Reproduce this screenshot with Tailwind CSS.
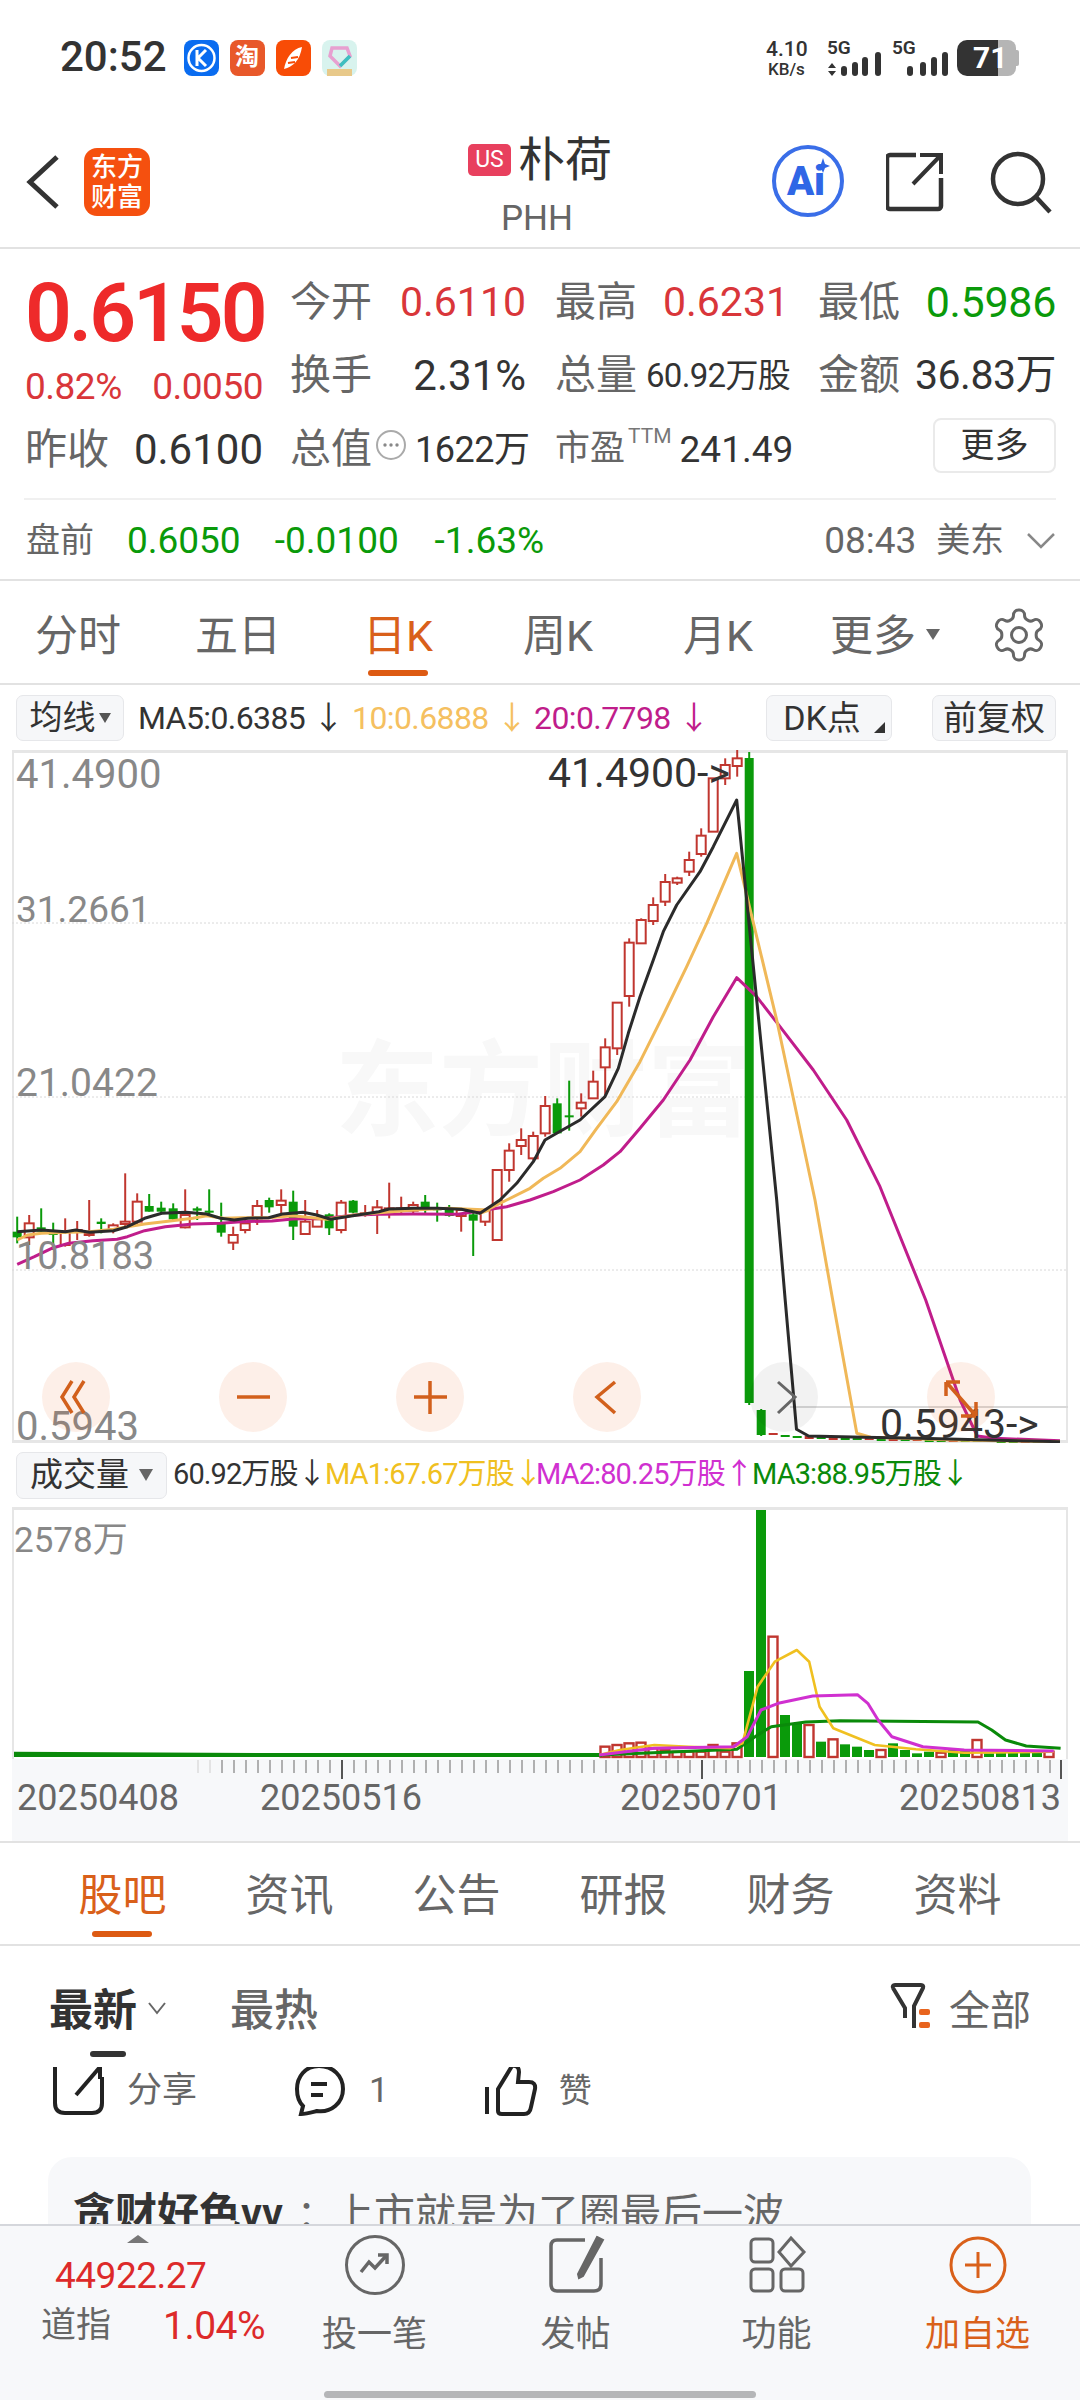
<!doctype html>
<html lang="zh">
<head>
<meta charset="utf-8">
<script src="https://cdn.jsdelivr.net/npm/@tailwindcss/browser@4"></script>
</head>
<body>
<div class="relative w-[1080px] h-[2400px] overflow-hidden bg-white text-[#333] font-['Roboto','Noto_Sans_CJK_SC',sans-serif]">

  <!-- status bar -->
  <div class="h-[115px] relative">
    <span class="absolute left-[60px] top-[32px] text-[42px] leading-[50px] font-medium text-[#333]">20:52</span>
    <svg class="absolute left-[180px] top-[36px]" width="190" height="44" viewBox="0 0 190 44">
      <rect x="4" y="4" width="35" height="36" rx="8" fill="#0a6cf0"/><circle cx="21.5" cy="22" r="13" fill="none" stroke="#fff" stroke-width="2.5"/><path d="M17 14V30M26 14L18 22L26 30" fill="none" stroke="#fff" stroke-width="3"/>
      <rect x="50" y="4" width="35" height="36" rx="8" fill="#e8582a"/><text x="67" y="29" font-size="24" font-weight="700" fill="#fff" text-anchor="middle" font-family="Noto Sans CJK SC">淘</text>
      <rect x="96" y="4" width="35" height="36" rx="8" fill="#f84c06"/><path d="M122 11C112 13 106 22 104 33C113 31 120 24 122 11Z" fill="#fff"/><path d="M111 22L118 21M108 27L115 26" stroke="#f84c06" stroke-width="2"/>
      <rect x="142" y="4" width="35" height="36" rx="8" fill="#d8f3ee"/><path d="M152 12H167L170 20L160 30L150 20Z" fill="none" stroke="#e7a0d0" stroke-width="3.5"/><path d="M160 30L170 20" stroke="#3cc0c0" stroke-width="3.5"/><rect x="147" y="33" width="25" height="7" fill="#e8c98a"/>
    </svg>
    <span class="absolute left-[766px] top-[39px] text-[21px] leading-[20px] font-medium">4.10</span>
    <span class="absolute left-[768px] top-[60px] text-[17px] leading-[18px] font-medium">KB/s</span>
    <span class="absolute left-[827px] top-[38px] text-[19px] leading-[20px] font-semibold">5G</span>
    <span class="absolute left-[892px] top-[38px] text-[19px] leading-[20px] font-semibold">5G</span>
    <svg class="absolute left-[826px] top-[48px]" width="125" height="30" viewBox="826 48 125 30">
      <path d="M832 63L836 68H828ZM832 76L828 71H836Z" fill="#333"/>
      <g fill="#333"><rect x="841" y="66" width="6" height="10" rx="3"/><rect x="852" y="62" width="6" height="14" rx="3"/><rect x="862" y="57" width="6" height="19" rx="3"/><rect x="875" y="52" width="6" height="24" rx="3"/>
      <rect x="907" y="66" width="6" height="10" rx="3"/><rect x="920" y="62" width="6" height="14" rx="3"/><rect x="931" y="57" width="6" height="19" rx="3"/><rect x="942" y="52" width="6" height="24" rx="3"/></g>
    </svg>
    <div class="absolute left-[957px] top-[40px] flex h-[36px] items-stretch">
      <div class="w-[41px] bg-[#333] rounded-l-[10px]"></div>
      <div class="w-[18px] bg-[#b5b5b5] rounded-r-[8px]"></div>
      <div class="w-[3px] my-[10px] bg-[#b5b5b5] rounded-r-[2px]"></div>
    </div>
    <span class="absolute left-[973px] top-[39px] text-[30px] leading-[38px] font-bold text-white">71</span>
  </div>

  <!-- title bar -->
  <div class="h-[134px] flex border-b-2 border-[#e2e2e2]">
    <div class="w-[400px] flex items-start">
      <svg class="ml-[25px] mt-[38px]" width="36" height="58" viewBox="0 0 36 58"><path d="M32 4L5 29L32 54" fill="none" stroke="#333" stroke-width="5"/></svg>
      <div class="ml-[23px] mt-[33px] w-[66px] h-[68px] rounded-[13px] bg-[#f5500f] text-white text-[26px] leading-[30px] font-medium flex items-center justify-center text-center">东方<br>财富</div>
    </div>
    <div class="w-[280px] flex flex-col items-center">
      <div class="flex items-center h-[66px] mt-[12px]">
        <span class="w-[43px] h-[32px] -mt-[1px] rounded-[5px] bg-[#e8405e] text-white text-[23px] leading-[32px] text-center">US</span>
        <span class="ml-[7px] text-[47px] leading-[56px] text-[#333]">朴荷</span>
      </div>
      <span class="-ml-[6px] text-[35px] leading-[36px] text-[#666] mt-[8px]">PHH</span>
    </div>
    <div class="w-[400px] relative">
      <svg class="absolute left-[90px] top-[28px]" width="75" height="75" viewBox="0 0 75 75">
        <circle cx="38" cy="38" r="34" fill="none" stroke="#3a6ee8" stroke-width="4"/>
        <text x="36" y="52" font-size="40" font-weight="900" fill="#2f66e6" text-anchor="middle" font-family="Roboto">Ai</text>
        <path d="M53 15L55 21L60 23L55 25L53 30L51 25L46 23L51 21Z" fill="#2f66e6"/>
      </svg>
      <svg class="absolute left-[206px] top-[36px]" width="62" height="62" viewBox="888 151 62 62">
        <path d="M918 155H892A3 3 0 0 0 889 158V206A3 3 0 0 0 892 209H940A3 3 0 0 0 943 206V178" fill="none" stroke="#333" stroke-width="4.5"/>
        <path d="M915 184L942 156M922 155H943V174" fill="none" stroke="#333" stroke-width="4"/>
      </svg>
      <svg class="absolute left-[310px] top-[36px]" width="64" height="64" viewBox="990 150 64 64">
        <circle cx="1018" cy="178" r="25" fill="none" stroke="#333" stroke-width="4.5"/><path d="M1036 196L1050 211" stroke="#333" stroke-width="4.5"/>
      </svg>
    </div>
  </div>

  <!-- quote -->
  <div class="h-[250px] flex whitespace-nowrap">
    <div class="w-[290px] pl-[25px] flex flex-col">
      <span class="text-[82px] leading-[90px] mt-[19px] font-semibold tracking-[-3px] text-[#ee2a2a]">0.6150</span>
      <div class="flex w-[238px] justify-between text-[37px] leading-[40px] mt-[9px] text-[#d9363a] tracking-[-0.5px]"><span>0.82%</span><span>0.0050</span></div>
      <div class="flex w-[238px] justify-between items-center text-[42px] leading-[46px] mt-[20px]"><span class="text-[#666]">昨收</span><span>0.6100</span></div>
    </div>
    <div class="flex-1 pr-[24px] flex flex-col pt-[17px]">
      <div class="h-[73px] flex items-center text-[41px]">
        <span class="w-[265px] flex justify-between items-center pr-[29px]"><span class="text-[#666]">今开</span><span class="text-[#d9363a]">0.6110</span></span>
        <span class="w-[263px] flex justify-between items-center pr-[29px]"><span class="text-[#666]">最高</span><span class="text-[#d9363a]">0.6231</span></span>
        <span class="flex-1 flex justify-between items-center"><span class="text-[#666]">最低</span><span class="text-[#0a9a0a] text-[43px] tracking-[-0.3px]">0.5986</span></span>
      </div>
      <div class="h-[73px] flex items-center text-[41px]">
        <span class="w-[265px] flex justify-between items-center pr-[29px]"><span class="text-[#666]">换手</span><span class="text-[42px]">2.31%</span></span>
        <span class="w-[263px] flex justify-between items-center pr-[28px]"><span class="text-[#666]">总量</span><span class="text-[33px] tracking-[-0.7px]">60.92万股</span></span>
        <span class="flex-1 flex justify-between items-center"><span class="text-[#666]">金额</span><span class="text-[41px] tracking-[-0.5px]">36.83万</span></span>
      </div>
      <div class="h-[75px] flex items-center text-[41px]">
        <span class="w-[265px] flex items-center"><span class="text-[#666]">总值</span>
          <svg class="ml-[3px] -mt-[10px] shrink-0" width="32" height="32" viewBox="0 0 32 32"><circle cx="16" cy="16" r="14" fill="none" stroke="#aaa" stroke-width="2"/><g fill="#888"><circle cx="10" cy="16" r="1.7"/><circle cx="16" cy="16" r="1.7"/><circle cx="22" cy="16" r="1.7"/></g></svg>
          <span class="ml-[8px] text-[36px] tracking-[-0.5px]">1622万</span></span>
        <span class="w-[235px] flex items-center relative"><span class="text-[#666] text-[35px]">市盈</span><span class="text-[21px] leading-[20px] text-[#777] ml-[3px] -mt-[28px]">TTM</span><span class="ml-[8px] text-[37px]">241.49</span></span>
        <span class="ml-[143px] w-[123px] h-[55px] -mt-[8px] text-[34px] border-2 border-[#eaeaea] rounded-[8px] flex items-center justify-center">更多</span>
      </div>
    </div>
  </div>
  <div class="mx-[24px] h-[2px] bg-[#f0f0f0] -mt-[1px]"></div>

  <!-- pre-market -->
  <div class="h-[81px] flex items-center pt-[2px] text-[37px] border-b-2 border-[#e2e2e2] pl-[26px] pr-[24px]">
    <span class="text-[#666] text-[34px] w-[101px]">盘前</span>
    <span class="text-[#0a9a0a] w-[148px]">0.6050</span>
    <span class="text-[#0a9a0a] w-[160px]">-0.0100</span>
    <span class="text-[#0a9a0a] w-[390px]">-1.63%</span>
    <span class="text-[#666] w-[112px]">08:43</span>
    <span class="text-[#666] text-[34px] w-[90px]">美东</span>
    <svg width="30" height="18" viewBox="0 0 30 18"><path d="M2 2L15 15L28 2" fill="none" stroke="#888" stroke-width="2.5"/></svg>
  </div>

  <!-- period tabs -->
  <div class="h-[104px] relative border-b-2 border-[#e2e2e2] text-[43px] text-[#666]">
    <div class="grid grid-cols-6 w-[960px] h-[100px] items-center text-center pt-[10px] -ml-[2px]">
      <span>分时</span><span>五日</span><span class="text-[#d9601a]">日K</span><span>周K</span><span>月K</span>
      <span class="flex items-center justify-center pl-[14px]">更多<i class="ml-[10px] -mt-[4px] w-0 h-0 border-x-[7px] border-x-transparent border-t-[11px] border-t-[#666]"></i></span>
    </div>
    <div class="absolute left-[368px] top-[89px] w-[60px] h-[6px] rounded-[3px] bg-[#dd5a12]"></div>
    <svg class="absolute left-[989px] top-[24px]" width="60" height="60" viewBox="0 0 24 24" fill="none" stroke="#666" stroke-width="1.2"><path d="M12.22 2h-.44a2 2 0 0 0-2 2v.18a2 2 0 0 1-1 1.73l-.43.25a2 2 0 0 1-2 0l-.15-.08a2 2 0 0 0-2.73.73l-.22.38a2 2 0 0 0 .73 2.73l.15.1a2 2 0 0 1 1 1.72v.51a2 2 0 0 1-1 1.74l-.15.09a2 2 0 0 0-.73 2.73l.22.38a2 2 0 0 0 2.73.73l.15-.08a2 2 0 0 1 2 0l.43.25a2 2 0 0 1 1 1.73V20a2 2 0 0 0 2 2h.44a2 2 0 0 0 2-2v-.18a2 2 0 0 1 1-1.73l.43-.25a2 2 0 0 1 2 0l.15.08a2 2 0 0 0 2.73-.73l.22-.39a2 2 0 0 0-.73-2.73l-.15-.08a2 2 0 0 1-1-1.74v-.5a2 2 0 0 1 1-1.74l.15-.09a2 2 0 0 0 .73-2.73l-.22-.38a2 2 0 0 0-2.73-.73l-.15.08a2 2 0 0 1-2 0l-.43-.25a2 2 0 0 1-1-1.73V4a2 2 0 0 0-2-2z"/><circle cx="12" cy="12" r="3"/></svg>
  </div>

  <!-- MA legend -->
  <div class="h-[65px] flex items-center pl-[16px] text-[32px] pt-[1px] tracking-[-0.6px]">
    <span class="w-[108px] h-[46px] bg-[#f6f7f9] border border-[#e6e7ea] rounded-[7px] flex items-center justify-center text-[33px] tracking-normal">均线<i class="ml-[3px] w-0 h-0 border-x-[6px] border-x-transparent border-t-[10px] border-t-[#555]"></i></span>
    <span class="ml-[14px] w-[214px]">MA5:0.6385 ↓</span>
    <span class="w-[182px] text-[#f5c060]">10:0.6888 ↓</span>
    <span class="w-[232px] text-[#c01d8b]">20:0.7798 ↓</span>
    <span class="relative w-[126px] h-[46px] bg-[#f6f7f9] border border-[#e6e7ea] rounded-[7px] flex items-center justify-center tracking-normal text-[34px] pr-[14px]">DK点<i class="absolute right-[6px] bottom-[7px] w-0 h-0 border-l-[11px] border-l-transparent border-b-[11px] border-b-[#333]"></i></span>
    <span class="ml-[40px] w-[124px] h-[46px] bg-[#f6f7f9] border border-[#e6e7ea] rounded-[7px] flex items-center justify-center tracking-normal text-[34px]">前复权</span>
  </div>

  <!-- price chart -->
  <div class="relative ml-[12px] w-[1056px] h-[693px] border-x-2 border-y-[3px] border-[#e6e6e6]">
    <span class="absolute left-[321px] top-[285px] text-[104px] leading-[110px] font-bold text-[#f8f8f8] whitespace-nowrap">东方财富</span>
    <svg id="price" class="absolute -left-[2px] -top-[3px]" width="1056" height="693" viewBox="12 750 1056 693"></svg>
    <span class="absolute left-[2px] top-[0px] text-[40px] leading-[44px] text-[#888]">41.4900</span>
    <span class="absolute left-[2px] top-[135px] text-[37px] leading-[44px] text-[#888]">31.2661</span>
    <span class="absolute left-[2px] top-[308px] text-[39px] leading-[44px] text-[#888]">21.0422</span>
    <span class="absolute left-[2px] top-[481px] text-[38px] leading-[44px] text-[#888]">10.8183</span>
    <span class="absolute left-[2px] top-[658px] text-[40px] leading-[32px] text-[#888]">0.5943</span>
    <span class="absolute left-[534px] top-[0px] text-[41px] leading-[40px] text-[#333]">41.4900-&gt;</span>
    <span class="absolute left-[866px] top-[655px] text-[41px] leading-[32px] text-[#333]">0.5943-&gt;</span>
    <!-- zoom and pan buttons -->
    <svg class="absolute -left-[2px] -top-[3px]" width="1056" height="693" viewBox="12 750 1056 693">
      <g fill="#e8641e" fill-opacity=".1"><ellipse cx="76" cy="1397" rx="34" ry="35"/><ellipse cx="253" cy="1397" rx="34" ry="35"/><ellipse cx="430" cy="1397" rx="34" ry="35"/><ellipse cx="607" cy="1397" rx="34" ry="35"/><ellipse cx="961" cy="1397" rx="34" ry="35"/></g>
      <ellipse cx="784" cy="1397" rx="34" ry="35" fill="#000" fill-opacity=".05"/>
      <g fill="none" stroke="#d2601c" stroke-width="3.5">
        <path d="M72 1381L62 1397L72 1413M84 1381L74 1397L84 1413"/>
        <path d="M237 1397H270"/>
        <path d="M414 1397H447M430 1381V1414"/>
        <path d="M615 1382L597 1397L615 1413"/>
        <path d="M946 1382H960M946 1382V1396M947 1383L976 1416M976 1402V1416M961 1416H976"/>
      </g>
      <path d="M778 1382L795 1397L778 1413" fill="none" stroke="#666" stroke-width="3"/>
    </svg>
  </div>

  <!-- volume legend -->
  <div class="h-[64px] flex items-center pl-[16px] text-[29px] tracking-[-0.9px] whitespace-nowrap">
    <span class="w-[151px] h-[47px] bg-[#f6f7f9] border border-[#e6e7ea] rounded-[7px] flex items-center justify-center text-[33px] tracking-normal">成交量<i class="ml-[10px] w-0 h-0 border-x-[7px] border-x-transparent border-t-[12px] border-t-[#666]"></i></span>
    <span class="ml-[6px] w-[152px]">60.92万股↓</span>
    <span class="w-[211px] text-[#f0c020]">MA1:67.67万股↓</span>
    <span class="w-[216px] text-[#d030d0]">MA2:80.25万股↑</span>
    <span class="text-[#0a8a0a]">MA3:88.95万股↓</span>
  </div>

  <!-- volume chart -->
  <div class="relative ml-[12px] w-[1056px] h-[252px] border-x-2 border-t-[3px] border-[#e6e6e6] overflow-hidden">
    <svg id="vol" class="absolute -left-[2px] -top-[3px]" width="1056" height="252" viewBox="12 1507 1056 252"></svg>
    <span class="absolute left-[0px] top-[10px] text-[35px] leading-[42px] text-[#888]">2578万</span>
  </div>

  <!-- dates -->
  <div class="relative ml-[12px] w-[1056px] h-[82px] bg-[#f7f8fa] text-[36px] text-[#666]">
    <svg id="ticks" class="absolute left-0 top-0" width="1056" height="20" viewBox="12 1758 1056 20"></svg>
    <div class="h-full flex pt-[17px] leading-[44px]">
      <span class="ml-[5px] w-[243px]">20250408</span>
      <span class="w-[360px]">20250516</span>
      <span class="w-[279px]">20250701</span>
      <span>20250813</span>
    </div>
  </div>
  <div class="h-[2px] bg-[#e2e2e2]"></div>

  <!-- section tabs -->
  <div class="relative h-[103px] border-b-2 border-[#e2e2e2] px-[39px] text-[44px] text-[#666]">
    <div class="grid grid-cols-6 h-[86px] items-center text-center pt-[20px]">
      <span class="text-[#d9601a]">股吧</span><span>资讯</span><span>公告</span><span>研报</span><span>财务</span><span>资料</span>
    </div>
    <div class="absolute left-[92px] top-[88px] w-[60px] h-[6px] rounded-[3px] bg-[#dd5a12]"></div>
  </div>

  <!-- filter row -->
  <div class="relative h-[121px] flex items-start pt-[40px] pl-[49px] text-[44px] leading-[50px]">
    <span class="font-semibold text-[#333]">最新</span>
    <svg class="ml-[10px] mt-[15px]" width="20" height="14" viewBox="0 0 20 14"><path d="M2 2L10 12L18 2" fill="none" stroke="#666" stroke-width="2"/></svg>
    <span class="ml-[63px] font-medium text-[#666]">最热</span>
    <svg class="ml-[571px] -mt-[4px]" width="44" height="50" viewBox="0 0 44 50"><path d="M4 6Q3 3 6 3H32Q35 3 34 6L25 24V46M4 6L16 26V36" fill="none" stroke="#333" stroke-width="4"/><rect x="30" y="27" width="11" height="6" rx="2" fill="#e8641e"/><rect x="30" y="40" width="11" height="6" rx="2" fill="#e8641e"/></svg>
    <span class="ml-[16px] text-[41px] text-[#666]">全部</span>
    <div class="absolute left-[90px] top-[105px] w-[36px] h-[6px] rounded-[3px] bg-[#333]"></div>
  </div>

  <!-- actions -->
  <div class="relative h-[90px] pl-[50px] flex items-start overflow-hidden">
    <svg width="60" height="50" viewBox="0 0 60 50" fill="none" stroke="#222" stroke-width="4"><path d="M5 0V36Q5 46 15 46H42Q52 46 52 36V10"/><path d="M26 28L50 0"/><path d="M50 0V12" /></svg>
    <span class="ml-[17px] mt-[4px] text-[35px] leading-[40px] text-[#666]">分享</span>
    <svg class="ml-[96px]" width="56" height="50" viewBox="0 0 56 50" fill="none" stroke="#222" stroke-width="4"><path d="M26 -1C12 -1 4 10 4 22C4 30 7 36 10 39L8 47C14 47 20 45 24 44C38 46 50 36 50 22C50 9 40 -1 26 -1Z"/><path d="M18 17H34M18 28H30"/></svg>
    <span class="ml-[20px] mt-[4px] text-[35px] leading-[40px] text-[#666]">1</span>
    <svg class="ml-[95px]" width="58" height="50" viewBox="0 0 58 50" fill="none" stroke="#222" stroke-width="4"><path d="M3 20V47"/><path d="M14 22V44Q14 47 18 47H40Q46 47 47 40L51 22Q52 15 45 15H34L35 5Q35 -2 28 -1Z"/></svg>
    <span class="ml-[17px] mt-[4px] text-[33px] leading-[40px] text-[#666]">赞</span>
  </div>

  <!-- comment card, cut by the bottom bar -->
  <div class="ml-[48px] w-[983px] h-[300px] rounded-[24px] bg-[#f7f8fa] pt-[33px] pl-[25px] flex items-start text-[38px] leading-[48px]">
    <span class="font-semibold text-[#333] text-[42px]">贪财好色vv</span>
    <span class="ml-[14px] text-[#666]">：</span>
    <span class="-ml-[2px] text-[#666] text-[41px]">上市就是为了圈最后一波</span>
  </div>

  <!-- bottom bar -->
  <div class="absolute left-0 bottom-0 w-full h-[176px] bg-[#f7f8fa] border-t-2 border-[#d5d7dc] flex items-start">
    <div class="relative w-[274px] h-full">
      <i class="absolute left-[127px] top-[9px] w-0 h-0 border-x-[11px] border-x-transparent border-b-[8px] border-b-[#777]"></i>
      <span class="absolute left-[55px] top-[28px] text-[37px] leading-[44px] text-[#dd2a2a] tracking-[-0.5px]">44922.27</span>
      <span class="absolute left-[41px] top-[78px] text-[35px] leading-[44px] text-[#666]">道指</span>
      <span class="absolute left-[163px] top-[78px] text-[39px] leading-[44px] text-[#dd2a2a] tracking-[-0.5px]">1.04%</span>
    </div>
    <div class="w-[201px] flex flex-col items-center text-[35px] leading-[44px] text-[#666] pt-[8px]">
      <svg width="62" height="62" viewBox="0 0 62 62" fill="none" stroke="#666" stroke-width="3"><circle cx="31" cy="31" r="28.5"/><path d="M17 38L25 28L31 34L42 22" stroke-width="3.5"/><path d="M34 21H43V30" stroke-width="3.5"/></svg>
      <span class="mt-[17px]">投一笔</span>
    </div>
    <div class="w-[201px] flex flex-col items-center text-[35px] leading-[44px] text-[#666] pt-[8px]">
      <svg width="62" height="62" viewBox="0 0 62 62" fill="none" stroke="#666" stroke-width="3.5"><path d="M40 6H12Q6 6 6 12V50Q6 57 12 57H49Q56 57 56 50V24"/><path d="M52 3L58 6L38 42L34 44L33 40Z" fill="#666" stroke-width="2"/></svg>
      <span class="mt-[17px]">发帖</span>
    </div>
    <div class="w-[201px] flex flex-col items-center text-[35px] leading-[44px] text-[#666] pt-[8px]">
      <svg width="62" height="62" viewBox="0 0 62 62" fill="none" stroke="#666" stroke-width="3"><rect x="5" y="5" width="22" height="23" rx="4"/><path d="M45 4L58 18L45 32L33 18Z"/><rect x="5" y="35" width="22" height="22" rx="4"/><rect x="35" y="35" width="22" height="22" rx="4"/></svg>
      <span class="mt-[17px]">功能</span>
    </div>
    <div class="w-[201px] flex flex-col items-center text-[35px] leading-[44px] text-[#d9601a] pt-[8px]">
      <svg width="62" height="62" viewBox="0 0 62 62" fill="none" stroke="#d9601a" stroke-width="3"><circle cx="31" cy="31" r="27"/><path d="M18 31H44M31 18V44"/></svg>
      <span class="mt-[17px]">加自选</span>
    </div>
    <div class="absolute left-[324px] top-[165px] w-[432px] h-[7px] rounded-full bg-[#b5b6b8]"></div>
  </div>
</div>

<script>
var RED='#c0362f',GRN='#0a9a0a',NS='http://www.w3.org/2000/svg';
function el(p,n,a){var e=document.createElementNS(NS,n);for(var k in a)e.setAttribute(k,a[k]);p.appendChild(e);return e;}
var price=document.getElementById('price');
function X(i){return 17.2+12*i;}
function candle(i,c,w1,b1,b2,w2){
  var x=X(i),col=c?RED:GRN;
  el(price,'line',{x1:x,x2:x,y1:w1,y2:w2,stroke:col,'stroke-width':2});
  if(c) el(price,'rect',{x:x-4.5,y:b1,width:9,height:Math.max(b2-b1,1),fill:'#fff',stroke:col,'stroke-width':2});
  else el(price,'rect',{x:x-4.5,y:b1,width:9,height:Math.max(b2-b1,2),fill:col});
}
[923,1097,1270].forEach(function(y){el(price,'line',{x1:12,x2:1068,y1:y,y2:y,stroke:'#d8d8d8','stroke-width':1,'stroke-dasharray':'2 2'});});
el(price,'line',{x1:790,x2:1068,y1:1407,y2:1407,stroke:'#d8d8d8','stroke-width':2});
var a=[[0,290,335,352,370],[1,285,310,352,375],[0,265,322,335,340],[0,308,335,345,390],[1,295,335,375,380],[1,303,330,335,360],[1,240,340,345,350],[0,295,305,312,340],[1,310,316,328,340],[1,160,305,312,325],[1,220,245,305,315],[0,222,258,275,275],[0,245,263,275,280],[0,250,265,298,300],[1,208,285,322,325],[0,260,265,272,300],[0,208,272,278,290],[0,248,310,338,350],[1,320,345,368,390],[1,300,310,330,340],[1,240,258,295,315],[0,233,240,262,278],[1,208,242,255,280],[0,212,245,320,360],[1,240,305,342,342],[1,270,298,320,320],[0,280,283,325,345],[1,240,248,330,340],[0,240,242,278,280],[1,255,280,283,290],[1,240,262,282,342],[1,188,265,275,295],[1,230,265,272,285],[1,245,255,272,280],[0,225,245,268,280],[0,248,265,270,305],[0,255,270,288,290],[1,265,270,288,335],[0,265,283,302,408],[1,270,270,305,318]];
a.forEach(function(d,i){candle(i,d[0],1120+d[1]/3,1120+d[2]/3,1120+d[3]/3,1120+d[4]/3);});
var b=[[1,1290,1290,1500,1500],[1,1210,1232,1290,1325],[1,1165,1200,1218,1245],[1,1175,1188,1255,1260],[1,1068,1098,1180,1190],[0,1075,1090,1180,1180],[0,1022,1126,1132,1172],[1,1060,1088,1105,1130],[1,992,1025,1075,1075],[1,895,922,982,1065],[1,788,788,925,945],[1,595,608,768,800],[1,535,540,610,610],[1,472,495,543,555],[1,402,426,485,498],[1,410,415,428,435],[1,335,360,395,408],[1,265,287,342,350],[1,115,115,275,275],[1,55,75,115,135],[1,30,55,78,110]];
b.forEach(function(d,i){candle(40+i,d[0],740+d[1]/3,740+d[2]/3,740+d[3]/3,740+d[4]/3);});
candle(61,0,752,758,1403,1405);
candle(62,0,1409,1410,1435,1436);
var tail=[[1,1433,2],[0,1435,2],[0,1436,2],[1,1436,3],[0,1437,2],[1,1437,3],[0,1438,2],[0,1438,2],[1,1438,2],[0,1439,2],[1,1439,2],[0,1439,2],[1,1439,2],[0,1440,2],[0,1440,2],[1,1440,2],[0,1440,2],[0,1440,2],[1,1440,2],[0,1441,2],[0,1441,2],[1,1441,2],[0,1441,2],[1,1441,2]];
tail.forEach(function(d,i){el(price,'rect',{x:X(63+i)-4.5,y:d[1],width:9,height:d[2],fill:d[0]?RED:GRN});});
function pts(list,fx,fy){return list.map(function(p){return fx(p[0]).toFixed(1)+','+fy(p[1]).toFixed(1);});}
var f5x=function(x){return x/2.904;},f5y=function(y){return 1120+y/3;},f4x=function(x){return 480+x/3;},f4y=function(y){return 740+y/3;},f6x=function(x){return 540+x/2.904;},f6y=function(y){return 1300+y/3;};
function ma(col,p5,p4,p6){
  var s=pts(p5,f5x,f5y).concat(pts(p4,f4x,f4y),pts(p6,f6x,f6y)).join(' ');
  el(price,'polyline',{points:s,fill:'none',stroke:col,'stroke-width':3,'stroke-linejoin':'round'});
}
ma('#c01d8b',[[50,433],[100,410],[150,385],[200,370],[270,362],[340,358],[370,350],[420,332],[480,320],[560,312],[640,310],[700,305],[790,303],[850,297],[950,295],[1030,285],[1100,283],[1200,282],[1330,283]],[[80,1400],[150,1380],[220,1355],[300,1320],[370,1275],[420,1235],[480,1165],[550,1080],[630,960],[700,830],[770,713],[830,770],[900,860],[1000,990],[1100,1140],[1200,1340]],[[1120,0],[1220,300],[1270,408],[1320,415],[1510,422]]);
ma('#f0b858',[[50,360],[80,345],[120,340],[200,337],[260,335],[330,328],[370,320],[420,312],[500,302],[560,295],[600,287],[650,295],[700,293],[780,293],[850,287],[950,298],[1030,285],[1100,278],[1200,270],[1300,265],[1420,270]],[[0,1420],[80,1380],[150,1345],[190,1315],[240,1285],[300,1235],[350,1165],[410,1085],[480,965],[550,825],[620,680],[680,550],[770,340],[890,840],[1005,1380]],[[850,0],[920,400],[960,412],[1200,420],[1510,425]]);
ma('#2b2b2b',[[50,335],[120,330],[190,335],[220,330],[260,337],[330,332],[370,320],[420,295],[470,280],[540,277],[600,282],[640,295],[680,300],[720,295],[780,293],[820,282],[880,277],[920,285],[960,298],[1020,288],[1100,275],[1130,267],[1200,265],[1270,265],[1340,268]],[[0,1420],[60,1380],[110,1330],[160,1265],[195,1200],[230,1180],[300,1140],[375,1070],[415,985],[445,880],[480,770],[520,660],[550,575],[590,495],[660,395],[700,320],[770,180],[890,1380]],[[712,0],[745,388],[780,408],[940,412],[1100,415],[1300,420],[1510,425]]);

var vol=document.getElementById('vol');
function VY(z){return 1460+z/3;}
function vbar(x,z,c){
  if(c) el(vol,'rect',{x:x-4.5,y:VY(z),width:9,height:1757-VY(z),fill:'#fff',stroke:RED,'stroke-width':2.4});
  else el(vol,'rect',{x:x-5,y:VY(z),width:10,height:1757-VY(z),fill:GRN});
}
var early=[30,45,70,80,110,125,150,175,195,240,265,285,350,370,400,440,490,530,565,590,635,700,730];
early.forEach(function(z){el(vol,'rect',{x:z/1.452,y:1754,width:12,height:3,fill:RED});});
[[605,860],[617,855],[629,850],[641,848],[653,865],[665,870],[677,875],[689,875],[701,875],[713,855],[725,875],[737,850]].forEach(function(d){vbar(d[0],d[1],1);});
vbar(749,633,0);vbar(761,142,0);
var v=[[1,530],[0,765],[0,790],[1,795],[0,845],[1,838],[0,853],[0,860],[0,870],[1,870],[0,850],[0,870],[0,880],[0,875],[1,878],[0,870],[0,870],[1,840],[0,880],[0,872],[0,878],[0,878],[0,878],[1,875]];
v.forEach(function(d,i){vbar(773+12*i,d[1],d[0]);});
function vline(col,list,w){el(vol,'polyline',{points:pts(list,function(x){return x/1.452;},VY).join(' '),fill:'none',stroke:col,'stroke-width':w,'stroke-linejoin':'round'});}
vline('#0a8a0a',[[20,880],[400,884],[870,885],[1070,868],[1100,825],[1120,800],[1170,786],[1220,782],[1420,786],[1440,810],[1460,840],[1490,858],[1540,865]],3);
el(vol,'rect',{x:12,y:1753,width:590,height:4,fill:'#0a8a0a'});
vline('#f0c020',[[870,885],[900,870],[950,855],[1000,860],[1060,865],[1078,850],[1100,680],[1125,605],[1157,570],[1175,605],[1190,740],[1210,805],[1270,855],[1330,868],[1400,878],[1530,875]],2.6);
vline('#d030d0',[[870,885],[950,865],[1065,860],[1085,830],[1105,750],[1130,730],[1180,708],[1245,704],[1260,730],[1275,780],[1295,830],[1340,860],[1400,870],[1530,873]],3);

var t=document.getElementById('ticks');
for(var x=198;x<1062;x+=12){el(t,'line',{x1:x,x2:x,y1:1759,y2:1772,stroke:x<215?'#ddd':'#999','stroke-width':1.5});}
[342,702,1061].forEach(function(x){el(t,'line',{x1:x,x2:x,y1:1759,y2:1778,stroke:'#555','stroke-width':2});});
</script>
</body>
</html>
